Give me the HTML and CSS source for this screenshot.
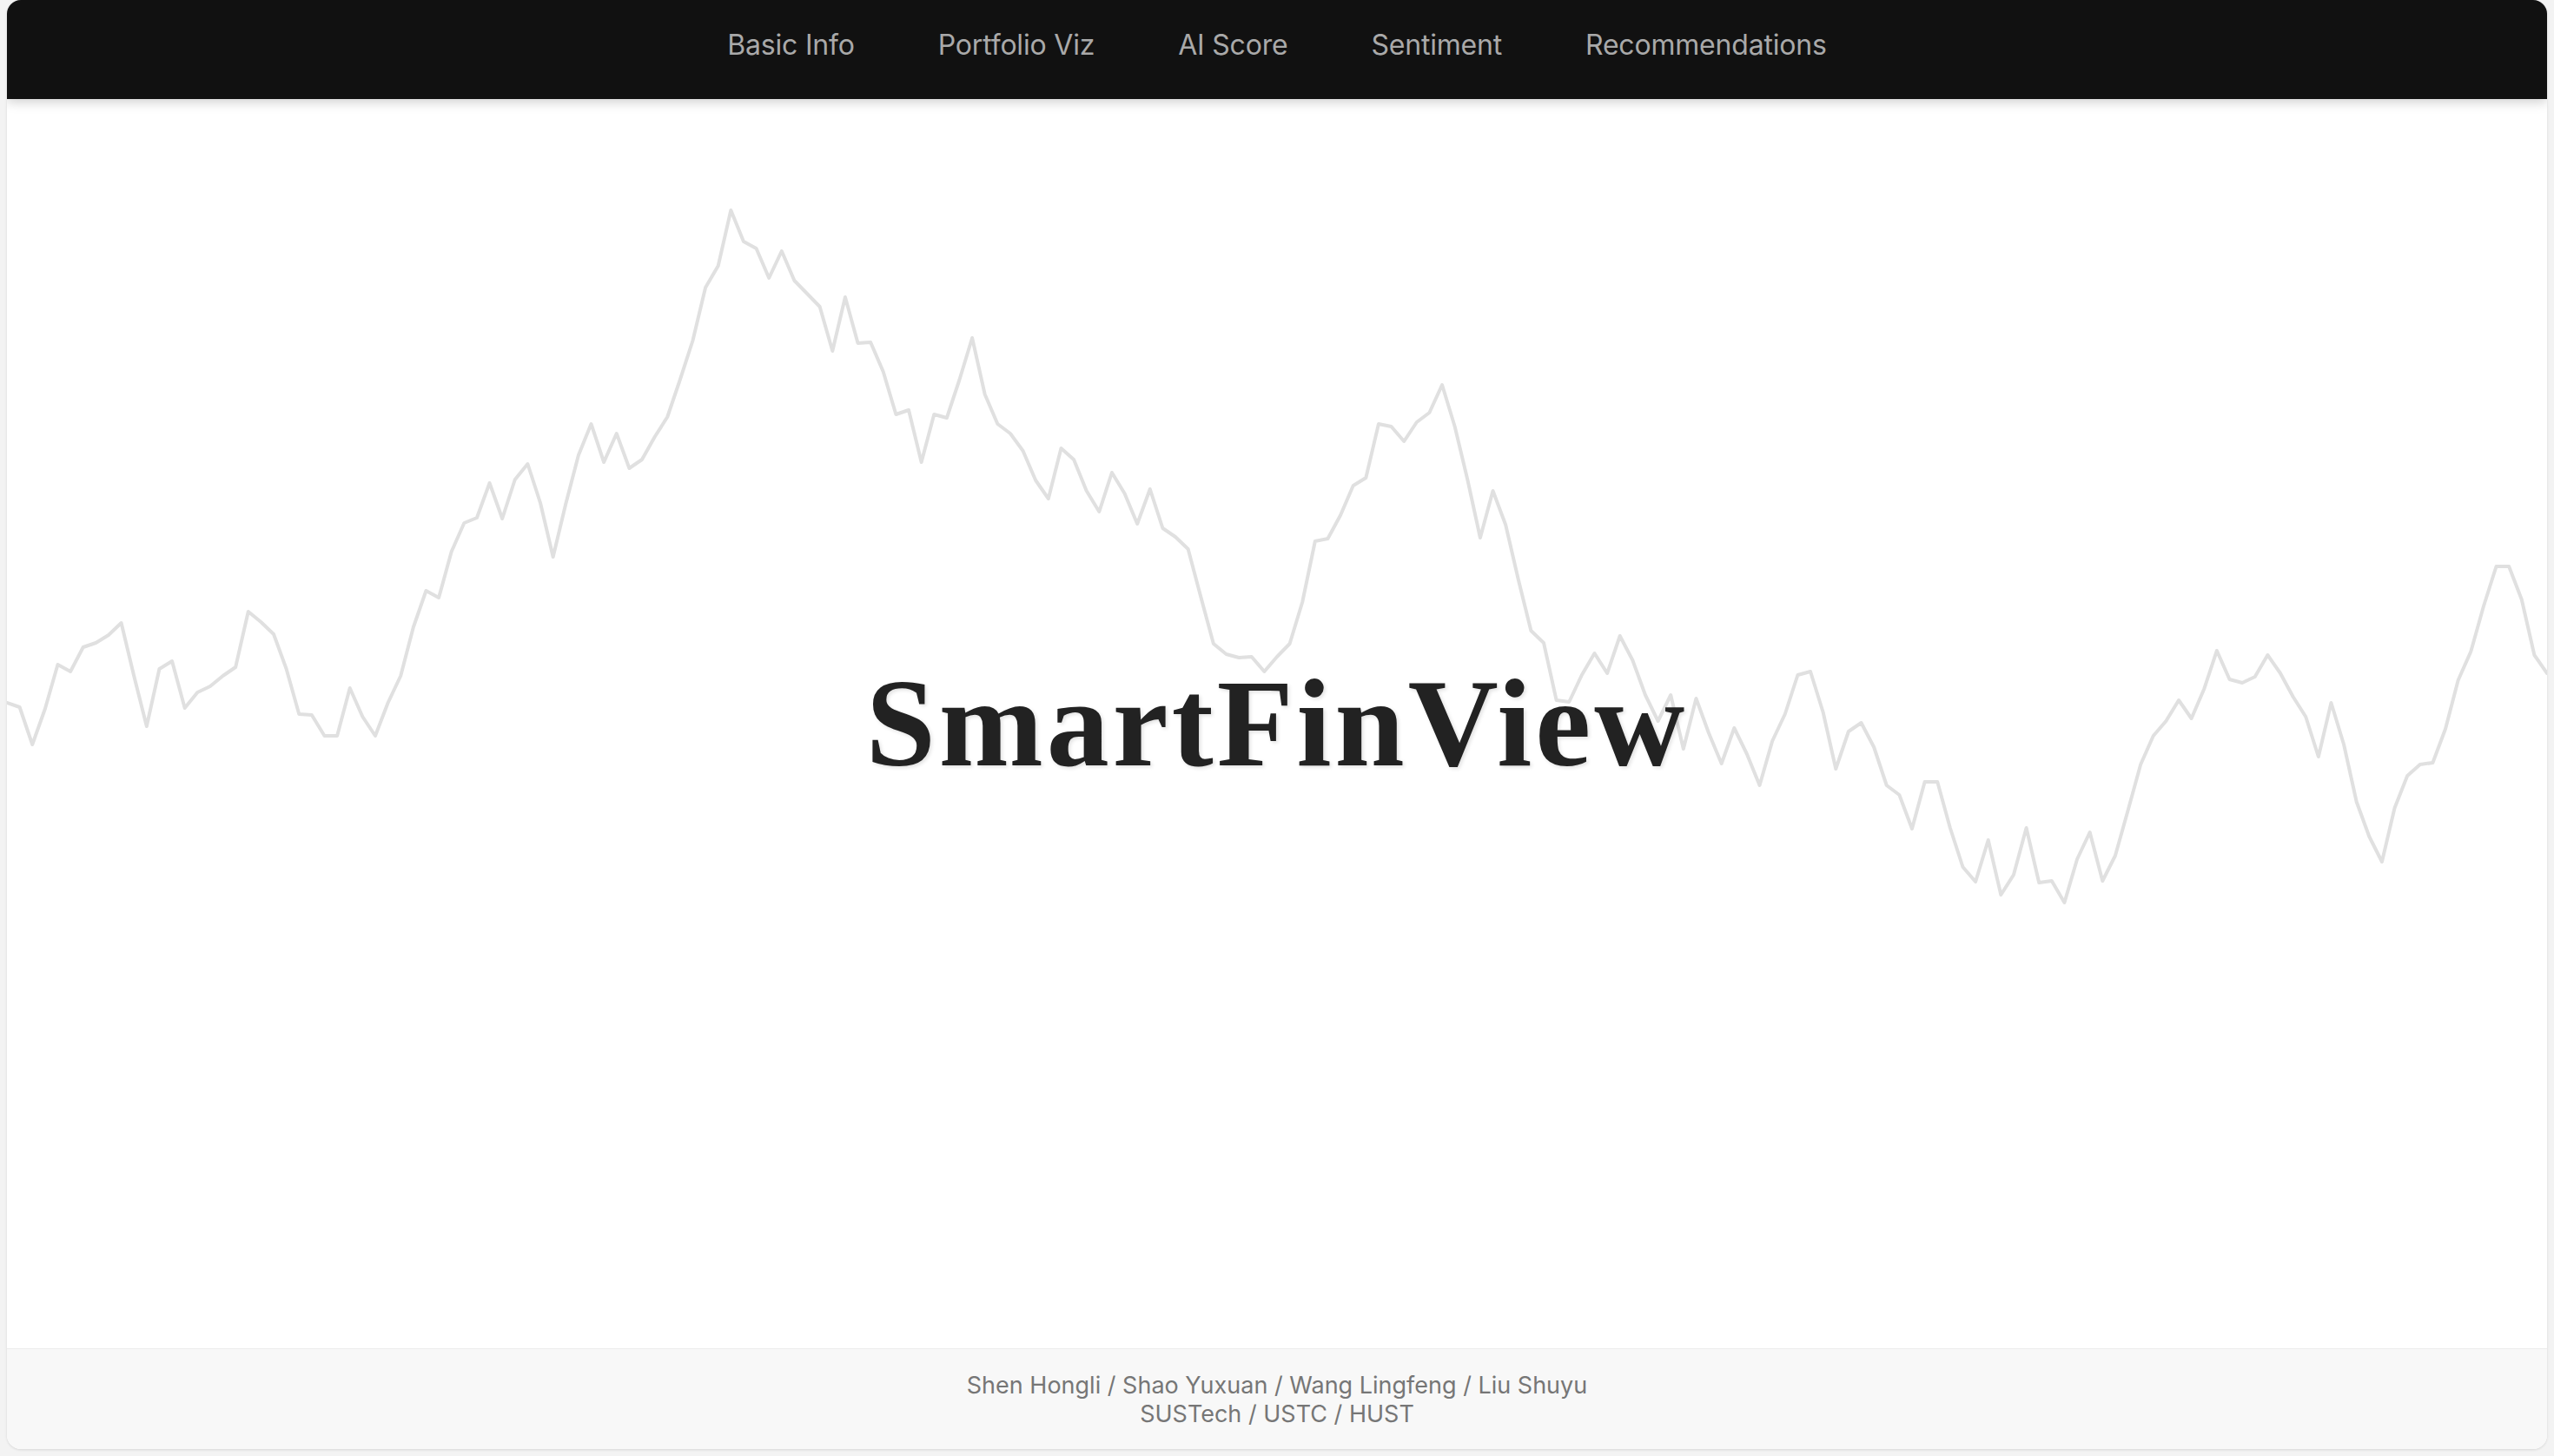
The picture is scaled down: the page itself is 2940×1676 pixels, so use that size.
FILE: index.html
```html
<!DOCTYPE html>
<html lang="en">
<head>
<meta charset="utf-8">
<title>SmartFinView</title>
<link rel="stylesheet" href="styles.css">
</head>
<body>
<div class="card">
  <nav class="topnav">
    <a class="nav-link" href="#">Basic Info</a>
    <a class="nav-link" href="#">Portfolio Viz</a>
    <a class="nav-link" href="#">AI Score</a>
    <a class="nav-link" href="#">Sentiment</a>
    <a class="nav-link" href="#">Recommendations</a>
  </nav>
  <main class="hero">
    <svg class="hero-chart" viewBox="0 114 200 1438" preserveAspectRatio="none" aria-hidden="true">
      <polyline class="hero-line" vector-effect="non-scaling-stroke" points="0,809 1,814 2,857 3,816 4,765 5,773 6,745 7,740 8,731 9,717 10,778 11,836 12,770 13,761 14,815 15,797 16,790 17,778 18,768 19,704 20,716 21,730 22,770 23,822 24,823 25,847 26,847 27,792 28,825 29,847 30,809 31,778 32,722 33,680 34,688 35,635 36,602 37,596 38,556 39,597 40,552 41,534 42,579 43,641 44,580 45,524 46,488 47,532 48,499 49,539 50,529 51,503 52,480 53,437 54,392 55,331 56,306 57,242 58,278 59,286 60,320 61,289 62,323 63,338 64,353 65,404 66,342 67,395 68,394 69,428 70,477 71,472 72,532 73,477 74,481 75,437 76,389 77,454 78,488 79,499 80,519 81,553 82,574 83,516 84,529 85,565 86,589 87,544 88,568 89,603 90,563 91,608 92,618 93,632 94,687 95,741 96,753 97,757 98,756 99,773 100,756 101,741 102,693 103,623 104,620 105,593 106,559 107,550 108,488 109,491 110,508 111,486 112,475 113,443 114,491 115,552 116,619 117,565 118,604 119,667 120,726 121,740 122,806 123,808 124,777 125,752 126,775 127,732 128,760 129,800 130,830 131,800 132,862 133,804 134,844 135,879 136,838 137,868 138,904 139,853 140,822 141,777 142,773 143,820 144,885 145,842 146,832 147,860 148,904 149,915 150,954 151,900 152,900 153,953 154,998 155,1015 156,967 157,1030 158,1007 159,953 160,1016 161,1014 162,1039 163,989 164,958 165,1014 166,985 167,933 168,880 169,847 170,830 171,806 172,827 173,793 174,749 175,782 176,786 177,779 178,754 179,775 180,802 181,825 182,871 183,809 184,857 185,923 186,963 187,992 188,930 189,893 190,880 191,878 192,839 193,783 194,750 195,698 196,652 197,652 198,690 199,754 200,775"/>
    </svg>
    <h1 class="hero-title">SmartFinView</h1>
  </main>
  <footer class="site-footer">
    <div class="footer-line">Shen Hongli / Shao Yuxuan / Wang Lingfeng / Liu Shuyu</div>
    <div class="footer-line">SUSTech / USTC / HUST</div>
  </footer>
</div>
</body>
</html>
```

FILE: styles.css
```css
* { box-sizing: border-box; }

html, body {
  margin: 0;
  height: 100%;
}

body {
  background: #f3f3f3;
  padding: 0 8px 8px 8px;
  font-family: Inter, "Noto Sans", "Liberation Sans", sans-serif;
}

.card {
  height: 100%;
  display: flex;
  flex-direction: column;
  background: #ffffff;
  border-radius: 16px;
  box-shadow: 0 1px 3px rgba(0, 0, 0, 0.12);
  overflow: hidden;
}

.topnav {
  flex: 0 0 114px;
  height: 114px;
  background: #111111;
  display: flex;
  justify-content: center;
  align-items: flex-start;
  padding-top: 33px;
  gap: 96px;
  position: relative;
  z-index: 2;
  box-shadow: 0 4px 12px rgba(0, 0, 0, 0.18);
}

.nav-link {
  color: #a9a9a9;
  text-decoration: none;
  font-size: 32px;
  line-height: 38px;
  letter-spacing: -0.2px;
}

.hero {
  flex: 1 1 auto;
  position: relative;
  display: flex;
  align-items: center;
  justify-content: center;
  overflow: hidden;
}

.hero-chart {
  position: absolute;
  left: 0;
  top: 0;
  width: 100%;
  height: 100%;
}

.hero-line {
  fill: none;
  stroke: #e0e0e0;
  stroke-width: 4px;
  stroke-linejoin: round;
  stroke-linecap: round;
}

.hero-title {
  position: relative;
  z-index: 1;
  margin: 0;
  font-family: "Liberation Serif", "Times New Roman", serif;
  font-weight: bold;
  font-size: 144px;
  line-height: 1.2;
  letter-spacing: 4px;
  color: #222222;
  text-shadow: 2px 2px 4px rgba(0, 0, 0, 0.12);
}

.site-footer {
  flex: 0 0 116px;
  height: 116px;
  background: #f8f8f8;
  border-top: 1px solid #ebebeb;
  display: flex;
  flex-direction: column;
  justify-content: center;
  align-items: center;
  color: #767676;
  font-size: 27px;
  line-height: 33px;
}

.footer-line {
  text-align: center;
}
```
